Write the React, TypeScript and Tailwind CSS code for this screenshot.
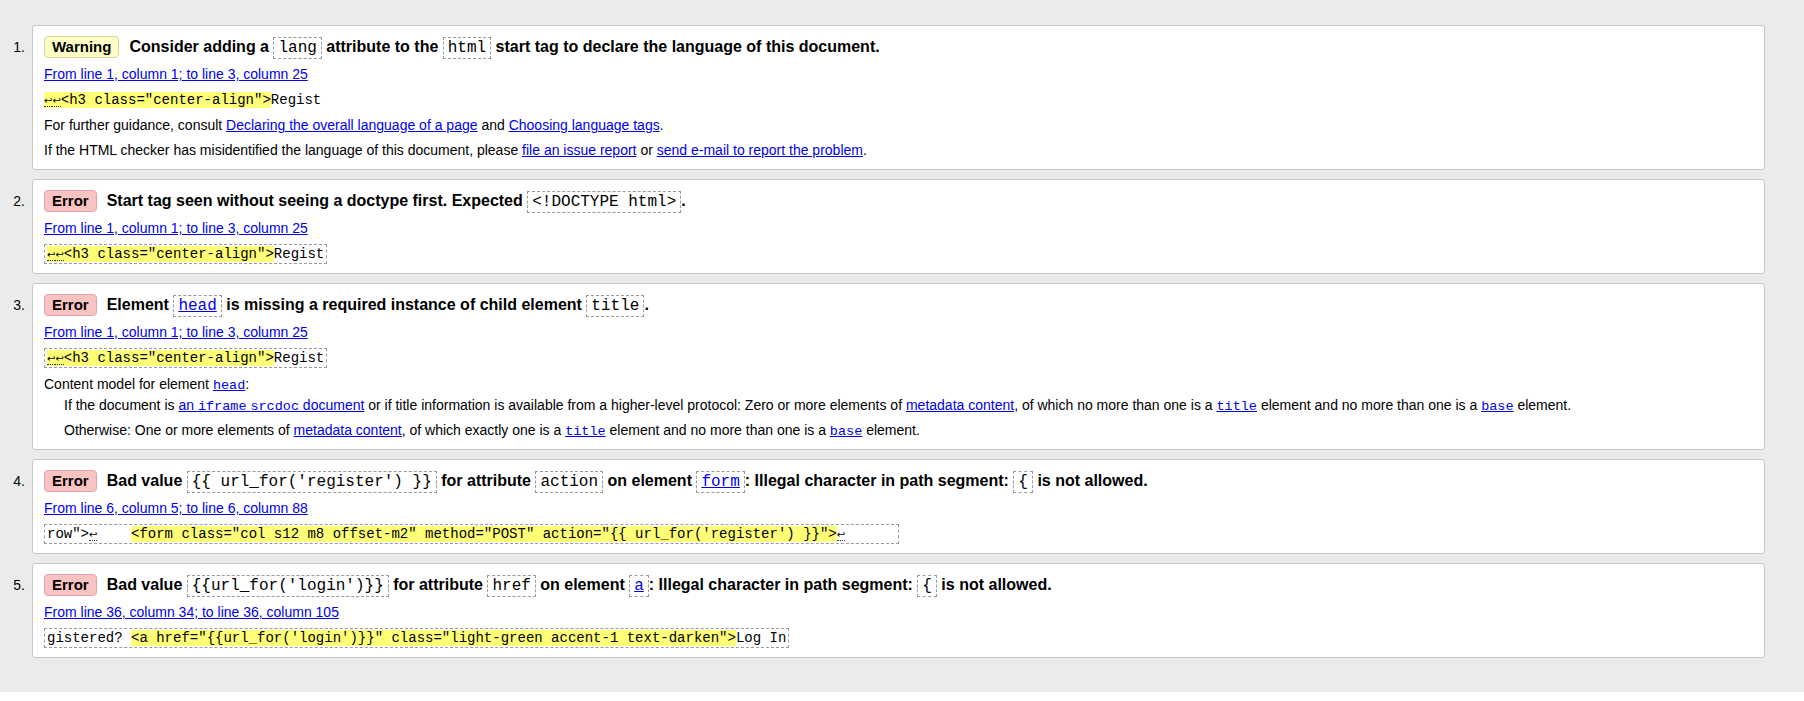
import React from "react";

const MONO = "font-['Liberation_Mono','DejaVu_Sans_Mono',monospace]";

function HCode({ children }: { children: React.ReactNode }) {
  return (
    <code
      className={`${MONO} text-[16px] leading-[16px] font-normal border border-dashed border-[#9a9a9a] px-[4px] py-[1px] whitespace-pre`}
    >
      {children}
    </code>
  );
}

function L({ children }: { children: React.ReactNode }) {
  return <a className="text-[#0000ee] underline cursor-pointer">{children}</a>;
}

function TCode({ children }: { children: React.ReactNode }) {
  return <code className={`${MONO} text-[13.5px] leading-[14px]`}>{children}</code>;
}

function LF() {
  return (
    <span className="font-['DejaVu_Sans',sans-serif] text-[10px] leading-[10px] border-b border-dotted border-[#333]">
      ↩
    </span>
  );
}

function Hl({ children }: { children: React.ReactNode }) {
  return <span className="bg-[#ffff77]">{children}</span>;
}

function Badge({ kind }: { kind: "Warning" | "Error" }) {
  const cls =
    kind === "Warning"
      ? "bg-[#fdfdc6] border-[#d6d69a]"
      : "bg-[#f9c3c3] border-[#e2a4a4]";
  return (
    <span
      className={`shrink-0 border rounded-[4px] px-[7px] leading-[20px] text-[15px] font-bold mr-[10px] ${cls}`}
    >
      {kind}
    </span>
  );
}

function Heading({ kind, children }: { kind: "Warning" | "Error"; children: React.ReactNode }) {
  return (
    <div className="h-[24px] flex items-center text-[16px] font-bold whitespace-nowrap">
      <Badge kind={kind} />
      <span className="leading-[24px]">{children}</span>
    </div>
  );
}

function Line({ mt, indent, children }: { mt: string; indent?: boolean; children: React.ReactNode }) {
  return (
    <p className={`${mt} h-[20px] leading-[20px] whitespace-nowrap ${indent ? "pl-[20px]" : ""}`}>
      {children}
    </p>
  );
}

function Loc({ children }: { children: React.ReactNode }) {
  return (
    <Line mt="mt-[5px]">
      <L>{children}</L>
    </Line>
  );
}

function Extract({ children, boxed = true }: { children: React.ReactNode; boxed?: boolean }) {
  if (!boxed) {
    return (
      <p className={`mt-[6px] h-[20px] leading-[20px] ${MONO} text-[14px] whitespace-pre`}>{children}</p>
    );
  }
  return (
    <div className="mt-[6px] h-[20px] flex">
      <span
        className={`h-[20px] border border-dashed border-[#9a9a9a] px-[2px] leading-[18px] ${MONO} text-[14px] whitespace-pre`}
      >
        {children}
      </span>
    </div>
  );
}

function Item({ n, children }: { n: number; children: React.ReactNode }) {
  return (
    <div className="flex">
      <div className="w-[32px] shrink-0 text-right pr-[7px] pt-[10px] leading-[24px] text-[14px]">
        {n}.
      </div>
      <div className="flex-1 bg-white border border-[#c6c6c6] rounded-[3px] pt-[9px] pb-[9px] px-[11px]">
        {children}
      </div>
    </div>
  );
}

export default function App() {
  return (
    <div className="font-['Liberation_Sans',Arial,sans-serif] text-[14px] text-black">
      <div className="bg-[#ebebeb] pt-[25px] pb-[34px] pr-[39px] flex flex-col gap-[9px]">
        <Item n={1}>
          <Heading kind="Warning">
            Consider adding a <HCode>lang</HCode> attribute to the <HCode>html</HCode> start tag to
            declare the language of this document.
          </Heading>
          <Loc>From line 1, column 1; to line 3, column 25</Loc>
          <Extract boxed={false}>
            <Hl>
              <LF />
              <LF />
              {'<h3 class="center-align">'}
            </Hl>
            Regist
          </Extract>
          <Line mt="mt-[5px]">
            For further guidance, consult <L>Declaring the overall language of a page</L> and{" "}
            <L>Choosing language tags</L>.
          </Line>
          <Line mt="mt-[5px]">
            If the HTML checker has misidentified the language of this document, please{" "}
            <L>file an issue report</L> or <L>send e-mail to report the problem</L>.
          </Line>
        </Item>

        <Item n={2}>
          <Heading kind="Error">
            Start tag seen without seeing a doctype first. Expected <HCode>{"<!DOCTYPE html>"}</HCode>.
          </Heading>
          <Loc>From line 1, column 1; to line 3, column 25</Loc>
          <Extract>
            <Hl>
              <LF />
              <LF />
              {'<h3 class="center-align">'}
            </Hl>
            Regist
          </Extract>
        </Item>

        <Item n={3}>
          <Heading kind="Error">
            Element{" "}
            <HCode>
              <L>head</L>
            </HCode>{" "}
            is missing a required instance of child element <HCode>title</HCode>.
          </Heading>
          <Loc>From line 1, column 1; to line 3, column 25</Loc>
          <Extract>
            <Hl>
              <LF />
              <LF />
              {'<h3 class="center-align">'}
            </Hl>
            Regist
          </Extract>
          <Line mt="mt-[6px]">
            Content model for element{" "}
            <L>
              <TCode>head</TCode>
            </L>
            :
          </Line>
          <Line mt="mt-[1px]" indent>
            If the document is{" "}
            <L>
              an <TCode>iframe</TCode> <TCode>srcdoc</TCode> document
            </L>{" "}
            or if title information is available from a higher-level protocol: Zero or more elements
            of <L>metadata content</L>, of which no more than one is a{" "}
            <L>
              <TCode>title</TCode>
            </L>{" "}
            element and no more than one is a{" "}
            <L>
              <TCode>base</TCode>
            </L>{" "}
            element.
          </Line>
          <Line mt="mt-[5px]" indent>
            Otherwise: One or more elements of <L>metadata content</L>, of which exactly one is a{" "}
            <L>
              <TCode>title</TCode>
            </L>{" "}
            element and no more than one is a{" "}
            <L>
              <TCode>base</TCode>
            </L>{" "}
            element.
          </Line>
        </Item>

        <Item n={4}>
          <Heading kind="Error">
            Bad value <HCode>{"{{ url_for('register') }}"}</HCode> for attribute{" "}
            <HCode>action</HCode> on element{" "}
            <HCode>
              <L>form</L>
            </HCode>
            : Illegal character in path segment: <HCode>{"{"}</HCode> is not allowed.
          </Heading>
          <Loc>From line 6, column 5; to line 6, column 88</Loc>
          <Extract>
            {'row">'}
            <LF />
            {"    "}
            <Hl>{`<form class="col s12 m8 offset-m2" method="POST" action="{{ url_for('register') }}">`}</Hl>
            <LF />
            {"      "}
          </Extract>
        </Item>

        <Item n={5}>
          <Heading kind="Error">
            Bad value <HCode>{"{{url_for('login')}}"}</HCode> for attribute <HCode>href</HCode> on
            element{" "}
            <HCode>
              <L>a</L>
            </HCode>
            : Illegal character in path segment: <HCode>{"{"}</HCode> is not allowed.
          </Heading>
          <Loc>From line 36, column 34; to line 36, column 105</Loc>
          <Extract>
            {"gistered? "}
            <Hl>{`<a href="{{url_for('login')}}" class="light-green accent-1 text-darken">`}</Hl>
            Log In
          </Extract>
        </Item>
      </div>
    </div>
  );
}
